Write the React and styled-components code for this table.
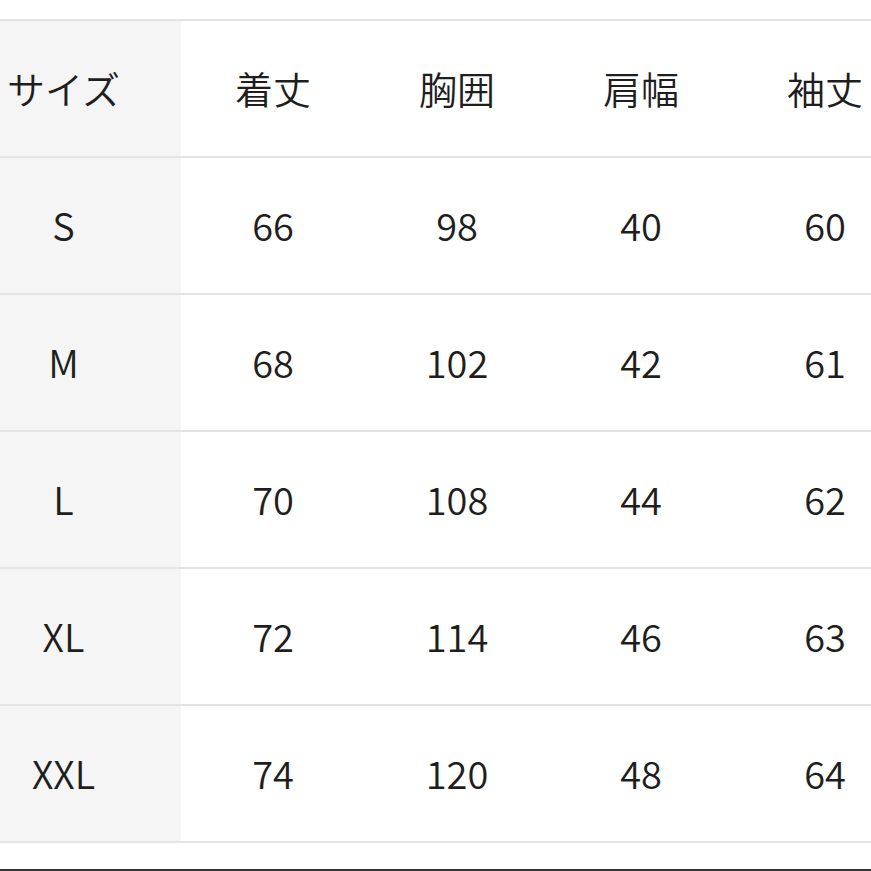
import styled, { createGlobalStyle } from "styled-components";

const GlobalStyle = createGlobalStyle`
  html, body {
    margin: 0;
    padding: 0;
    background: #ffffff;
  }
  body {
    font-family: "Noto Sans CJK JP", "Noto Sans", sans-serif;
    color: #222222;
  }
`;

const headers = ["サイズ", "着丈", "胸囲", "肩幅", "袖丈"];

const rows = [
  ["S", 66, 98, 40, 60],
  ["M", 68, 102, 42, 61],
  ["L", 70, 108, 44, 62],
  ["XL", 72, 114, 46, 63],
  ["XXL", 74, 120, 48, 64],
];

const App = () => {
  return (
    <>
      <GlobalStyle />
      <Page>
        <Scroller>
          <SizeTable>
            <tbody>
              <Row>
                {headers.map((h, i) => (
                  <Cell key={h} $first={i === 0}>
                    {h}
                  </Cell>
                ))}
              </Row>
              {rows.map((r) => (
                <Row key={r[0]}>
                  {r.map((v, i) => (
                    <Cell key={i} $first={i === 0}>
                      {v}
                    </Cell>
                  ))}
                </Row>
              ))}
            </tbody>
          </SizeTable>
        </Scroller>
        <BottomBar />
      </Page>
    </>
  );
};

export default App;

const Page = styled.div`
  width: 871px;
  height: 871px;
  padding-top: 19px;
  box-sizing: border-box;
  display: flex;
  flex-direction: column;
  overflow: hidden;
`;

const Scroller = styled.div`
  width: 100%;
  overflow: hidden;
`;

const SizeTable = styled.table`
  border-collapse: collapse;
  table-layout: fixed;
  margin-left: -54px;
  width: 971px;
`;

const Row = styled.tr`
  height: 137px;
  border-top: 2px solid #e4e4e4;
  &:last-child {
    border-bottom: 2px solid #e4e4e4;
  }
`;

const Cell = styled.td`
  width: ${(p) => (p.$first ? "235px" : "184px")};
  padding: 0 0 2px;
  text-align: center;
  vertical-align: middle;
  font-size: 38px;
  line-height: 1;
  font-weight: 350;
  color: #1e1e1e;
  background: ${(p) => (p.$first ? "#f5f5f5" : "#ffffff")};
`;

const BottomBar = styled.div`
  margin-top: auto;
  height: 2px;
  background: #333333;
  flex-shrink: 0;
`;
